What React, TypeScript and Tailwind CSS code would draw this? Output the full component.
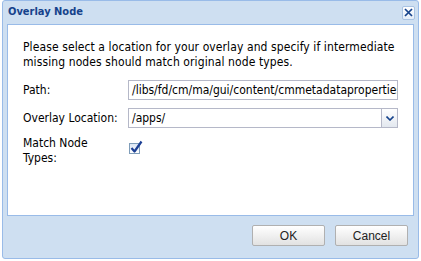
import React from "react";

const font = { fontFamily: '"DejaVu Sans Condensed", Tahoma, "DejaVu Sans", sans-serif' };

function CheckBox() {
  return (
    <div className="relative h-[11px] w-[11px] border border-[#7f9db9] bg-gradient-to-b from-[#dce6f4] to-white">
      <svg className="absolute -top-[4px] left-[0px]" width="13" height="14" viewBox="0 0 13 14">
        <path d="M1.5 8 L4.5 11.5 L11.5 1.5" fill="none" stroke="#1c3f94" strokeWidth="2.2" strokeLinejoin="round" />
      </svg>
    </div>
  );
}

function Field({ value, select }: { value: string; select?: boolean }) {
  return (
    <div className="flex h-[20px] w-[270px] items-stretch border border-[#b5b8c8] bg-white">
      <div className="flex-1 overflow-hidden whitespace-nowrap pl-[3px] text-[12px] leading-[18px] text-black">
        {value}
      </div>
      {select ? (
        <div className="flex w-[16px] items-center justify-center border-l border-[#b5b8c8] bg-gradient-to-b from-white to-[#e3e8ef]">
          <svg width="8" height="5" viewBox="0 0 8 5">
            <path d="M0.5 0.5 L4 4 L7.5 0.5" fill="none" stroke="#15428b" strokeWidth="1.6" />
          </svg>
        </div>
      ) : null}
    </div>
  );
}

export default function App() {
  return (
    <div className="h-[261px] w-[421px] bg-white pl-[2px]" style={font}>
      <div className="flex h-[259px] w-[417px] flex-col rounded-[3px] border border-[#99bbe8] bg-[#cedff1]">
        <div className="flex h-[23px] items-center justify-between pl-[5px] pr-[3px]">
          <span className="text-[11px] font-bold text-[#15428b]">Overlay Node</span>
          <div className="flex h-[14px] w-[13px] items-center justify-center rounded-[2px] border border-[#a9c3e3] bg-gradient-to-b from-white to-[#e4edf8]">
            <svg width="9" height="9" viewBox="0 0 9 9">
              <path d="M1 1 L8 8 M8 1 L1 8" stroke="#15428b" strokeWidth="1.7" />
            </svg>
          </div>
        </div>
        <div className="mx-[4px] h-[192px] border border-[#99bbe8] bg-white px-[15px] pt-[15px]">
          <p className="text-[12px] leading-[15px] tracking-[0.1px] text-black">
            Please select a location for your overlay and specify if intermediate missing nodes should match original node types.
          </p>
          <div className="mt-[10px] flex flex-col gap-[8px] text-[12px] text-black">
            <div className="flex items-center">
              <span className="w-[105px]">Path:</span>
              <Field value="/libs/fd/cm/ma/gui/content/cmmetadataproperties" />
            </div>
            <div className="flex items-center">
              <span className="w-[105px]">Overlay Location:</span>
              <Field value="/apps/" select />
            </div>
            <div className="flex items-start">
              <span className="w-[105px] leading-[15px]">
                Match Node
                <br />
                Types:
              </span>
              <div className="pl-[1px] pt-[7px]">
                <CheckBox />
              </div>
            </div>
          </div>
        </div>
        <div className="flex flex-1 items-start justify-end gap-[10px] pr-[10px] pt-[9px]">
          {["OK", "Cancel"].map((label) => (
            <button
              key={label}
              type="button"
              className="h-[21px] w-[73px] rounded-[2px] border border-[#b0b0b0] bg-gradient-to-b from-white to-[#e2e2e2] text-[12px] text-[#222]"
              style={{ fontFamily: '"Liberation Sans", Arial, sans-serif' }}
            >
              {label}
            </button>
          ))}
        </div>
      </div>
    </div>
  );
}
